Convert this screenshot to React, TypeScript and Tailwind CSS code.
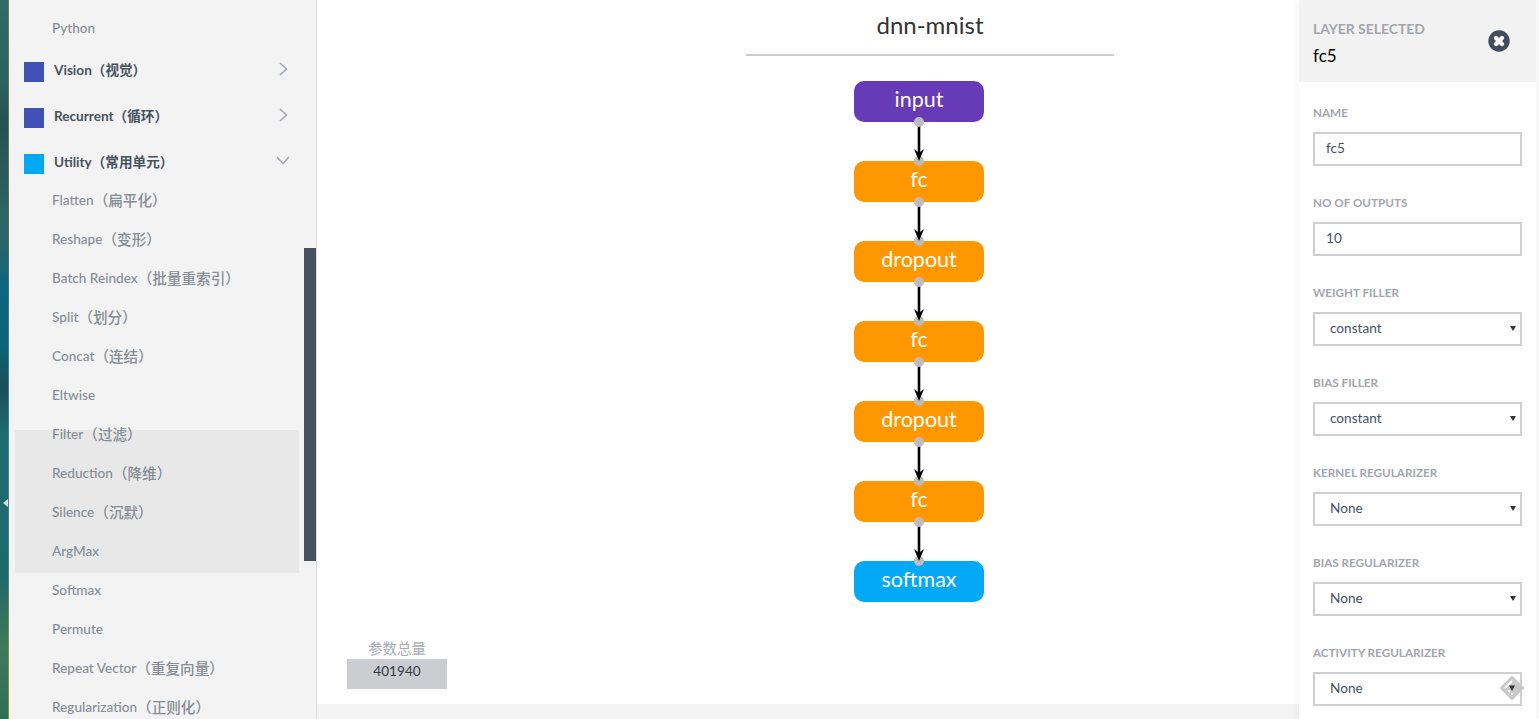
const FONT = "font-['Lato','Noto_Sans_CJK_SC',sans-serif]";

function Sub({ t, cn }: { t: string; cn?: string }) {
  return (
    <div className="relative z-10 flex h-[39px] shrink-0 items-center pl-[43px] text-[13.6px] font-medium whitespace-nowrap text-[#868d96]">
      <span>{t}</span>
      {cn && <span className="text-[14.6px]">（{cn}）</span>}
    </div>
  );
}

function Head({ t, color, open, className }: { t: string; color: string; open?: boolean; className: string }) {
  return (
    <div className={`flex shrink-0 items-center pr-[27px] pl-[15px] text-[13.6px] font-bold text-[#47525f] ${className}`}>
      <span className={`mt-[4px] h-5 w-5 ${color}`} />
      <span className="ml-[10px] flex-1 pt-[1px] whitespace-nowrap">{t}</span>
      {open ? (
        <svg width="14" height="9" viewBox="0 0 14 9" className="-mt-[3px] mr-[-1px]" fill="none" stroke="#a0a7af" strokeWidth="1.6">
          <path d="M1 1 L7 7.5 L13 1" />
        </svg>
      ) : (
        <svg width="10" height="14" viewBox="0 0 10 14" className="-mt-[2px] mr-[1px]" fill="none" stroke="#a0a7af" strokeWidth="1.6">
          <path d="M2 1 L8.5 7 L2 13" />
        </svg>
      )}
    </div>
  );
}

function Node({ t, color }: { t: string; color: string }) {
  return (
    <div className={`flex h-[41px] w-[130px] items-center justify-center rounded-[10px] pb-[3px] text-[21.5px] leading-none text-white ${color}`}>
      {t}
    </div>
  );
}

function Link() {
  return (
    <svg width="130" height="39" viewBox="0 0 130 39" className="relative z-10 block overflow-visible">
      <line x1="65" y1="0" x2="65" y2="34" stroke="#000" strokeWidth="2.6" />
      <circle cx="65" cy="0" r="5" fill="#bdbdbd" />
      <circle cx="65" cy="39" r="5" fill="#bdbdbd" />
      <path d="M60 27 L65 31 L70 27 L65 39 Z" fill="#000" />
    </svg>
  );
}

function Field({ label, children }: { label: string; children: React.ReactNode }) {
  return (
    <div className="flex h-[90px] shrink-0 flex-col">
      <div className="flex h-[41px] items-center pt-[3px] text-[11.7px] font-bold whitespace-nowrap text-[#a3a6ad] uppercase">
        {label}
      </div>
      {children}
    </div>
  );
}

const box =
  "h-[34px] w-[209px] border-2 border-[#d0d0d0] bg-white px-[11px] pb-[2px] text-[13.6px] text-[#47525f] outline-none";

function Sel({ v }: { v: string }) {
  return (
    <div className="relative h-[34px] w-[209px]">
      <select defaultValue={v} className={`${box} appearance-none pl-[15px]`}>
        <option>{v}</option>
      </select>
      <svg width="6" height="5" viewBox="0 0 6 5" className="absolute top-[14px] left-[197px]">
        <path d="M0 0 H6 L3 5 Z" fill="#333" />
      </svg>
    </div>
  );
}

export default function App() {
  return (
    <div className={`flex h-[719px] w-[1539px] overflow-hidden bg-white ${FONT}`}>
      {/* wallpaper strip */}
      <div className="relative w-[9px] shrink-0 bg-[linear-gradient(180deg,#2f6c63_0%,#2a625c_12%,#25524f_17%,#2a5d5a_25%,#2c6663_30%,#2a6468_34%,#0a6780_40%,#0b6478_48%,#1b4f58_54%,#1f6a6c_60%,#1d6a6c_80%,#2f6e62_84%,#3f7a5a_90%,#2e6f52_100%)]">
        <div className="absolute top-[499px] left-[3px] h-0 w-0 border-y-[4px] border-r-[5px] border-y-transparent border-r-[#dddddd]" />
        <div className="absolute top-0 right-0 bottom-0 w-[1px] bg-[linear-gradient(180deg,#6a7a62_0%,#6c6a52_20%,#4d6f78_40%,#3a7f98_50%,#4d7f86_80%,#8a8a3f_92%,#98883f_100%)]" />
      </div>

      {/* sidebar */}
      <div className="relative flex w-[308px] shrink-0 flex-col overflow-hidden border-r border-[#dcdcdc] bg-[#f3f3f3] pt-[8px]">
        <div className="absolute top-[430px] left-[6px] h-[143px] w-[284px] bg-[#e8e8e8]" />
        <div className="absolute top-[248px] right-0 h-[313px] w-[12px] bg-[#47525f]" />
        <div className="pt-[1px] -mb-[1px]">
          <Sub t="Python" />
        </div>
        <Head t="Vision（视觉）" color="bg-[#3f51b5]" className="h-[46px]" />
        <Head t="Recurrent（循环）" color="bg-[#3f51b5]" className="h-[46px]" />
        <Head t="Utility（常用单元）" color="bg-[#03a9f4]" open className="h-[42px] pt-[4px]" />
        <Sub t="Flatten" cn="扁平化" />
        <Sub t="Reshape" cn="变形" />
        <Sub t="Batch Reindex" cn="批量重索引" />
        <Sub t="Split" cn="划分" />
        <Sub t="Concat" cn="连结" />
        <Sub t="Eltwise" />
        <Sub t="Filter" cn="过滤" />
        <Sub t="Reduction" cn="降维" />
        <Sub t="Silence" cn="沉默" />
        <Sub t="ArgMax" />
        <Sub t="Softmax" />
        <Sub t="Permute" />
        <Sub t="Repeat Vector" cn="重复向量" />
        <Sub t="Regularization" cn="正则化" />
      </div>

      {/* canvas */}
      <div className="flex w-[982px] shrink-0 flex-col">
        <div className="flex-1">
          <div className="ml-[429px] flex h-[56px] w-[368px] items-center justify-center border-b-2 border-[#cccccc] pb-[4px] text-[24px] text-[#333333]">
            dnn-mnist
          </div>
          <div className="mt-[25px] ml-[537px] flex w-[130px] flex-col">
            <Node t="input" color="bg-[#673ab7]" />
            <Link />
            <Node t="fc" color="bg-[#ff9800]" />
            <Link />
            <Node t="dropout" color="bg-[#ff9800]" />
            <Link />
            <Node t="fc" color="bg-[#ff9800]" />
            <Link />
            <Node t="dropout" color="bg-[#ff9800]" />
            <Link />
            <Node t="fc" color="bg-[#ff9800]" />
            <Link />
            <Node t="softmax" color="bg-[#03a9f4]" />
          </div>
          <div className="mt-[37px] ml-[30px] w-[100px] text-center">
            <div className="h-[20px] text-[14.4px] leading-[19px] text-[#a9abb0]">参数总量</div>
            <div className="flex h-[30px] items-center justify-center bg-[#cccdd1] pb-[6px] text-[13.6px] text-[#333a44]">
              401940
            </div>
          </div>
        </div>
        <div className="h-[15px] bg-[#f3f3f3]" />
      </div>

      {/* right panel */}
      <div className="relative z-20 flex w-[237px] shrink-0 flex-col bg-white shadow-[-3px_0_7px_rgba(0,0,0,0.035)]">
        <div className="relative h-[82px] shrink-0 bg-[#f2f2f2] pl-[14px]">
          <div className="pt-[21px] text-[13.9px] leading-[16px] font-bold text-[#a3a6ad]">LAYER SELECTED</div>
          <div className="mt-[8px] text-[17px] leading-[22px] text-black">fc5</div>
          <svg width="22" height="22" viewBox="0 0 22 22" className="absolute top-[30px] left-[189px]">
            <circle cx="11" cy="11" r="10.7" fill="#414c5c" />
            <path d="M8 8 L14 14 M14 8 L8 14" stroke="#fff" strokeWidth="4.4" strokeLinecap="round" />
          </svg>
        </div>
        <div className="flex flex-col pl-[14px]">
          <div className="h-[9px]" />
          <Field label="Name">
            <input readOnly value="fc5" className={box} />
          </Field>
          <Field label="No of outputs">
            <input readOnly value="10" className={box} />
          </Field>
          <Field label="Weight filler">
            <Sel v="constant" />
          </Field>
          <Field label="Bias filler">
            <Sel v="constant" />
          </Field>
          <Field label="Kernel regularizer">
            <Sel v="None" />
          </Field>
          <Field label="Bias regularizer">
            <Sel v="None" />
          </Field>
          <Field label="Activity regularizer">
            <Sel v="None" />
          </Field>
        </div>
        <svg width="26" height="26" viewBox="0 0 26 26" className="absolute top-[675px] left-[200px]">
          <path d="M13 2 L24 13 L13 24 L2 13 Z" fill="#c9c9c9" stroke="#c9c9c9" strokeWidth="2" strokeLinejoin="round" />
          <path d="M6 13 L13 6" stroke="#fff" strokeWidth="2" />
          <circle cx="10" cy="16" r="1.3" fill="#fff" />
          <circle cx="13" cy="19" r="1.3" fill="#fff" />
          <path d="M10 10.5 H16 L13 16 Z" fill="#333" />
        </svg>
      </div>
      <div className="flex-1 bg-[#f8f8f8]" />
    </div>
  );
}
